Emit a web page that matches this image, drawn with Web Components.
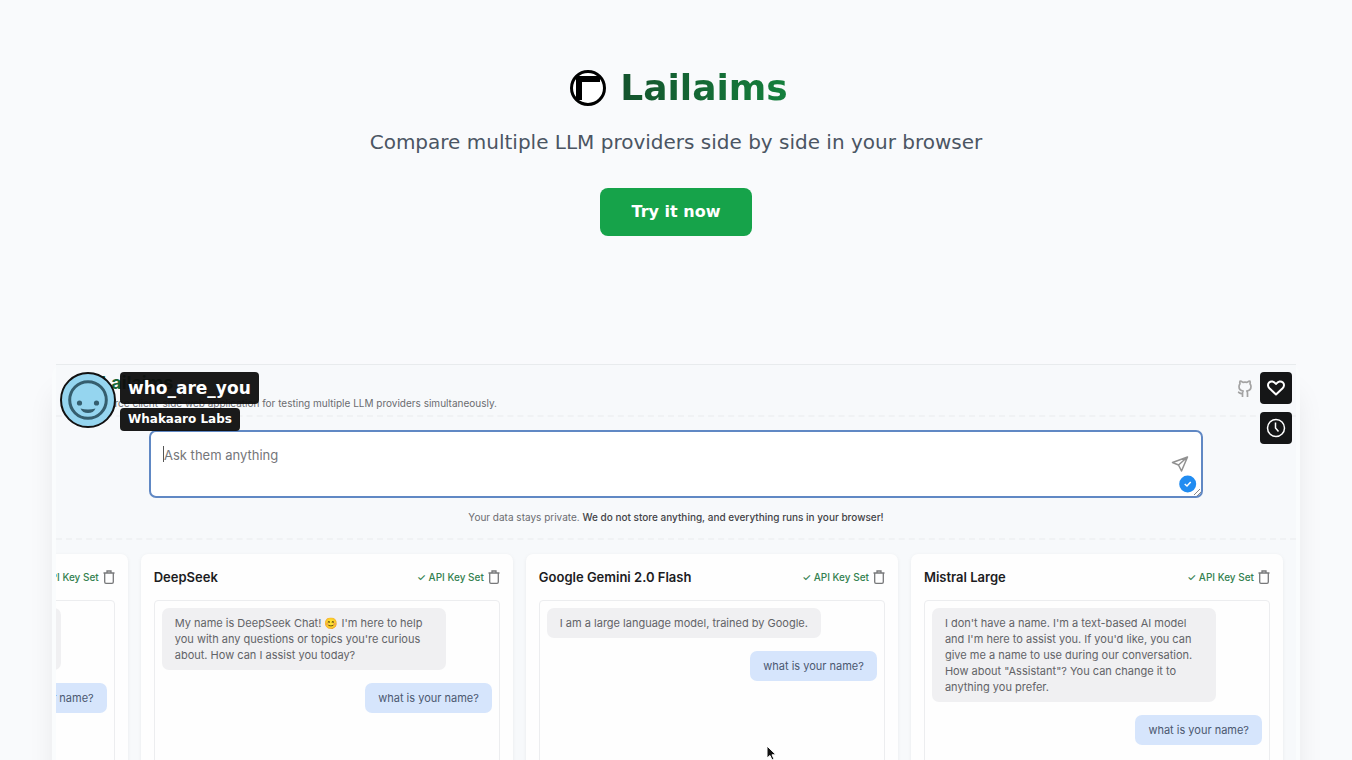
<!DOCTYPE html>
<html lang="en">
<head>
<meta charset="utf-8">
<meta name="viewport" content="width=device-width, initial-scale=1">
<title>Lailaims</title>
<style>
  body {
    margin: 0;
    min-height: 100vh;
    background: #f9fafc;
    font-family: "DejaVu Sans", sans-serif;
  }
</style>
</head>
<body>
<lailaims-page></lailaims-page>

<script>
class LailaimsPage extends HTMLElement {
  constructor() {
    super();
    this.shadowDOM = this.attachShadow({ mode: 'open' });
  }

  connectedCallback() {
    this.shadowDOM.innerHTML = `
      <style>
        :host {
          display: block;
          height: 100vh;
          overflow: hidden;
        }
        main {
          max-width: 1248px;
          margin: 0 auto;
          padding: 64px 16px 0;
          display: grid;
          gap: 128px;
        }
      </style>
      <main>
        <hero-section heading="Lailaims">
          Compare multiple LLM providers side by side in your browser
          <span slot="action">Try it now</span>
        </hero-section>
        <video-frame video="who_are_you" author="Whakaaro Labs">
          <demo-app></demo-app>
        </video-frame>
      </main>
    `;
  }
}

class HeroSection extends HTMLElement {
  constructor() {
    super();
    this.shadowDOM = this.attachShadow({ mode: 'open' });
  }

  connectedCallback() {
    this.shadowDOM.innerHTML = `
      <style>
        :host {
          display: flex;
          flex-direction: column;
          align-items: center;
          text-align: center;
        }
        .brand {
          display: flex;
          align-items: center;
          gap: 14px;
          padding-left: 6px;
          margin-bottom: 16px;
        }
        .brand svg {
          width: 36px;
          height: 36px;
        }
        h1 {
          margin: 0;
          font-size: 36px;
          line-height: 48px;
          color: transparent;
          background: linear-gradient(to right, #14532d, #15803d);
          -webkit-background-clip: text;
          background-clip: text;
        }
        p {
          margin: 0 0 32px;
          font-size: 20px;
          line-height: 28px;
          color: #4b5563;
        }
        a {
          padding: 12px 32px;
          border-radius: 8px;
          background: #16a34a;
          color: #fff;
          font-size: 16px;
          font-weight: 700;
          line-height: 24px;
          text-decoration: none;
        }
        a:hover {
          background: #15803d;
        }
      </style>
      <div class="brand">
        <svg viewBox="0 0 36 36" aria-hidden="true">
          <circle cx="18" cy="18" r="16.5" fill="#fff" stroke="#000" stroke-width="3"/>
          <path d="M6 6H30V12H12V30H6Z"/>
        </svg>
        <h1>${this.getAttribute('heading')}</h1>
      </div>
      <p><slot></slot></p>
      <a href="#app"><slot name="action"></slot></a>
    `;
  }
}

class VideoFrame extends HTMLElement {
  constructor() {
    super();
    this.shadowDOM = this.attachShadow({ mode: 'open' });
  }

  connectedCallback() {
    this.shadowDOM.innerHTML = `
      <style>
        :host {
          display: block;
          position: relative;
          padding: 0 4px;
          border-radius: 12px;
          box-shadow: 0 25px 30px -6px rgba(0, 0, 0, 0.1);
          background: #fafcfd;
        }
        .screen {
          overflow: hidden;
        }
        .overlay {
          position: absolute;
          top: 8px;
          left: 8px;
          right: 8px;
          display: flex;
          align-items: flex-start;
        }
        .avatar {
          width: 56px;
          height: 56px;
        }
        .titles {
          flex: 1;
          display: flex;
          flex-direction: column;
          align-items: flex-start;
          gap: 4px;
          margin-left: 4px;
        }
        .titles a {
          padding: 0 8px;
          border-radius: 4px;
          background: rgba(14, 14, 14, 0.95);
          color: #fff;
          font-weight: 700;
          text-decoration: none;
        }
        .title {
          font-size: 17px;
          line-height: 32px;
        }
        .author {
          font-size: 12px;
          line-height: 23px;
        }
        .actions {
          display: grid;
          gap: 8px;
        }
        button {
          display: grid;
          place-items: center;
          width: 32px;
          height: 32px;
          padding: 0;
          border: 0;
          border-radius: 4px;
          background: #151617;
        }
        button svg {
          width: 20px;
          height: 20px;
          fill: none;
          stroke: #fff;
        }
      </style>
      <div class="screen"><slot></slot></div>
      <div class="overlay">
        <svg class="avatar" viewBox="0 0 56 56" aria-hidden="true">
          <circle cx="28" cy="28" r="27" fill="#95d5ef" stroke="#111" stroke-width="2"/>
          <circle cx="28" cy="28" r="18.3" fill="none" stroke="#355e6e" stroke-width="3"/>
          <circle cx="19.5" cy="31" r="2.6" fill="#355e6e"/>
          <circle cx="36.5" cy="31" r="2.6" fill="#355e6e"/>
          <path d="M20.5 36.5Q28 38.5 35.5 36.5Q33.5 41 28 41T20.5 36.5Z" fill="#355e6e"/>
        </svg>
        <div class="titles">
          <a class="title" href="#video">${this.getAttribute('video')}</a>
          <a class="author" href="#author">${this.getAttribute('author')}</a>
        </div>
        <div class="actions">
          <button type="button" aria-label="Like">
            <svg viewBox="0 0 20 20" stroke-width="2">
              <path d="M10 16.5L3.4 10.2C1.6 8.4 1.6 5.8 3.1 4.5C5 2.9 7.8 3.2 10 6C12.2 3.2 15 2.9 16.9 4.5C18.4 5.8 18.4 8.4 16.6 10.2Z" stroke-linejoin="round"/>
            </svg>
          </button>
          <button type="button" aria-label="Watch later">
            <svg viewBox="0 0 20 20" stroke-width="1.5">
              <circle cx="10" cy="10" r="8.5"/>
              <path d="M9.5 4.5V10L12.5 13.5"/>
            </svg>
          </button>
        </div>
      </div>
    `;
  }
}

class DemoApp extends HTMLElement {
  constructor() {
    super();
    this.shadowDOM = this.attachShadow({ mode: 'open' });
  }

  connectedCallback() {
    this.shadowDOM.innerHTML = `
      <style>
        :host {
          display: block;
          position: relative;
          background: #f7f9fb;
          border-top: 1px solid #e8ebed;
          font-family: Inter, sans-serif;
          color: #6b6c70;
        }
        header {
          display: flex;
          justify-content: space-between;
          align-items: flex-start;
          height: 43px;
          padding: 7px 44px 0 13px;
          border-bottom: 2px dashed #f0f2f4;
        }
        h2 {
          margin: 0 0 0 32px;
          font-size: 18px;
          line-height: 22px;
          color: #166534;
        }
        .about {
          margin: 0;
          font-size: 10px;
          line-height: 18px;
        }
        .github {
          width: 16px;
          height: 18px;
          margin: 8px -1px 0 0;
        }
        .ask {
          padding: 13px 93px;
          border-bottom: 2px dashed #f0f2f4;
        }
        .box {
          position: relative;
          display: grid;
        }
        textarea {
          box-sizing: border-box;
          width: 100%;
          height: 68px;
          padding: 14px 13px;
          border: 2px solid #6088c4;
          border-radius: 7px;
          background: #fff;
          font: 13px/18px Inter, sans-serif;
          resize: none;
          outline: 0;
        }
        textarea::placeholder {
          color: #75767a;
          opacity: 1;
        }
        .tools {
          position: absolute;
          right: 0;
          bottom: 0;
          width: 34px;
          height: 46px;
        }
        .caret {
          position: absolute;
          left: 14px;
          top: 16px;
          width: 1px;
          height: 16px;
          background: #555;
        }
        .private {
          margin: 11px 0 0;
          font-size: 10px;
          line-height: 16px;
          text-align: center;
        }
        .private strong {
          font-weight: 500;
          color: #434448;
        }
        .cards {
          display: flex;
          justify-content: flex-end;
          gap: 13px;
          padding: 14px 13px 0 0;
        }
        .pointer {
          position: absolute;
          left: 709px;
          top: 380px;
          width: 12px;
          height: 16px;
        }
      </style>
      <header>
        <div>
          <h2>Lailaims</h2>
          <p class="about">Open source client-side web application for testing multiple LLM providers simultaneously.</p>
        </div>
        <svg class="github" viewBox="0 0 16 18" fill="none" stroke="#a3a3a3" stroke-width="1.7" stroke-linejoin="round" aria-hidden="true">
          <path d="M5.5 17V13.5C3 14 2.5 12.5 1 12M10.5 17V13C10.5 12 10.2 11.5 9.8 11C12.5 10.7 14 9.2 14 6.5C14 5.4 13.7 4.5 13 3.8C13.3 3 13.3 2 13 1.2C12 1.2 11 1.7 10 2.4C8.7 2.1 7.3 2.1 6 2.4C5 1.7 4 1.2 3 1.2C2.7 2 2.7 3 3 3.8C2.3 4.5 2 5.4 2 6.5C2 9.2 3.5 10.7 6.2 11C5.7 11.5 5.5 12.5 5.5 13.5V17"/>
        </svg>
      </header>
      <div class="ask">
        <div class="box">
          <textarea aria-label="Prompt" placeholder="Ask them anything"></textarea>
          <span class="caret"></span>
          <svg class="tools" viewBox="0 0 34 46" aria-hidden="true">
            <path d="M18.5 5L3.5 10.5L9.5 13L12.5 19ZM9.5 13L18.5 5" fill="none" stroke="#919191" stroke-width="1.5" stroke-linejoin="round"/>
            <circle cx="18.7" cy="32" r="8.5" fill="#218cf1"/>
            <path d="M15.700 32L18 34L21.700 30" fill="none" stroke="#fff" stroke-width="1.5"/>
            <path d="M25 43L31 37M28 44L32 40" stroke="#888" stroke-width="1"/>
          </svg>
        </div>
        <p class="private">Your data stays private. <strong>We do not store anything, and everything runs in your browser!</strong></p>
      </div>
      <div class="cards">
        <provider-card>
          <chat-bubble loading></chat-bubble>
          <chat-bubble user>what is your name?</chat-bubble>
        </provider-card>
        <provider-card name="DeepSeek">
          <chat-bubble>My name is DeepSeek Chat! 😊 I'm here to help you with any questions or topics you're curious about. How can I assist you today?</chat-bubble>
          <chat-bubble user>what is your name?</chat-bubble>
        </provider-card>
        <provider-card name="Google Gemini 2.0 Flash">
          <chat-bubble>I am a large language model, trained by Google.</chat-bubble>
          <chat-bubble user>what is your name?</chat-bubble>
        </provider-card>
        <provider-card name="Mistral Large">
          <chat-bubble>I don't have a name. I'm a text-based AI model and I'm here to assist you. If you'd like, you can give me a name to use during our conversation. How about "Assistant"? You can change it to anything you prefer.</chat-bubble>
          <chat-bubble user>what is your name?</chat-bubble>
        </provider-card>
      </div>
      <svg class="pointer" viewBox="0 0 12 16" aria-hidden="true">
        <path d="M2 1V13L5 10.5L7 15L9 14L7 9.8H11Z" fill="#111" stroke="#fff" stroke-width="1"/>
      </svg>
    `;
  }
}

class ProviderCard extends HTMLElement {
  constructor() {
    super();
    this.shadowDOM = this.attachShadow({ mode: 'open' });
  }

  connectedCallback() {
    this.shadowDOM.innerHTML = `
      <style>
        :host {
          box-sizing: border-box;
          flex: 0 0 calc(30% + 4px);
          padding: 13px 13px 0;
          border-radius: 7px 7px 0 0;
          background: #fefefe;
          box-shadow: 0 1px 4px rgba(0, 0, 0, 0.06);
        }
        .head {
          display: flex;
          align-items: center;
          height: 20px;
          margin-bottom: 13px;
        }
        h3 {
          flex: 1;
          margin: 0;
          font-size: 13px;
          font-weight: 600;
          line-height: 20px;
          color: #1c1c1e;
        }
        .key {
          font-size: 10px;
          font-weight: 500;
          line-height: 16px;
          color: #338150;
        }
        button {
          display: grid;
          padding: 0;
          margin-left: 4px;
          border: 0;
          background: none;
        }
        button svg {
          width: 12px;
          height: 14px;
        }
        .chat {
          display: flex;
          flex-direction: column;
          gap: 13px;
          min-height: 240px;
          padding: 7px;
          border: 1px solid #ecedef;
          border-radius: 4px;
        }
      </style>
      <div class="head">
        <h3>${this.getAttribute('name') || ''}</h3>
        <span class="key">✓ API Key Set</span>
        <button type="button" aria-label="Remove key">
          <svg viewBox="0 0 12 14" fill="none" stroke="#77787a" stroke-width="1.3">
            <path d="M0.5 3H11.5M4 3V1H8V3M1.7 3V12Q1.7 13.3 3 13.3H9Q10.3 13.3 10.3 12V3"/>
          </svg>
        </button>
      </div>
      <div class="chat"><slot></slot></div>
    `;
  }
}

class ChatBubble extends HTMLElement {
  constructor() {
    super();
    this.shadowDOM = this.attachShadow({ mode: 'open' });
  }

  connectedCallback() {
    this.shadowDOM.innerHTML = `
      <style>
        :host {
          box-sizing: border-box;
          align-self: flex-start;
          max-width: 86%;
          padding: 7px 13px;
          border-radius: 7px;
          background: #f0f0f2;
          color: #626367;
          font-size: 11px;
          line-height: 16px;
        }
        :host([user]) {
          align-self: flex-end;
          background: #d6e5fc;
          color: #4b5870;
        }
        :host([loading]) {
          width: 86%;
          min-height: 62px;
        }
      </style>
      <slot></slot>
    `;
  }
}

customElements.define('chat-bubble', ChatBubble);
customElements.define('provider-card', ProviderCard);
customElements.define('demo-app', DemoApp);
customElements.define('video-frame', VideoFrame);
customElements.define('hero-section', HeroSection);
customElements.define('lailaims-page', LailaimsPage);
</script>
</body>
</html>
